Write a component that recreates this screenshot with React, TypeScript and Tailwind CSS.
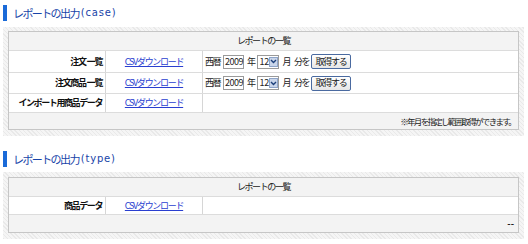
import React from "react";

const font = { fontFamily: '"Noto Sans CJK JP", "Noto Sans", sans-serif' };

function Heading({ jp, en }: { jp: string; en: string }) {
  return (
    <div className="flex items-center h-[16px] pl-[3px]">
      <div className="w-[4px] h-[16px] bg-[#1a6ad8]" />
      <div className="ml-[6px] text-[11px] leading-[16px] text-[#1844a8] flex">
        <span className="tracking-[-1.6px]">{jp}</span>
        <span className="ml-[2px] tracking-[0.8px]" style={{ fontFamily: '"DejaVu Sans", sans-serif', fontSize: "10px" }}>{en}</span>
      </div>
    </div>
  );
}

function Select() {
  return (
    <span className="inline-flex items-center h-[14px] w-[22px] border border-[#9a9a9a] bg-white">
      <span className="text-[9px] leading-[12px] pl-[2px] w-[11px] tracking-[-0.3px]">12</span>
      <span className="ml-auto mr-[1px] w-[9px] h-[10px] bg-[#c9d5ea] border border-[#8ea4c8] flex items-center justify-center">
        <svg width="7" height="5" viewBox="0 0 7 5">
          <path d="M1 1 L3.5 3.5 L6 1" stroke="#1c3f7a" strokeWidth="1.4" fill="none" />
        </svg>
      </span>
    </span>
  );
}

function Controls() {
  return (
    <div className="flex items-center text-[9px] tracking-[-1.5px] text-[#222] pl-[2px]">
      <span>西暦</span>
      <span className="ml-[3px] inline-flex items-center h-[14px] w-[21px] border border-[#9a9a9a] bg-white pl-[1px] tracking-[-0.5px]">2009</span>
      <span className="ml-[3px]">年</span>
      <span className="ml-[2px]"><Select /></span>
      <span className="ml-[4px]">月</span>
      <span className="ml-[4px]">分を</span>
      <span className="ml-[2px] inline-flex items-center justify-center h-[15px] w-[40px] border border-[#4a6aa0] rounded-[2px] bg-[linear-gradient(#ffffff,#e6e6e6)] text-[9px] tracking-[-1.2px] text-[#111]">取得する</span>
    </div>
  );
}

const pattern =
  "bg-[repeating-linear-gradient(45deg,#e9e9e9_0px,#e9e9e9_1px,#f5f5f5_1px,#f5f5f5_3px)]";

function Row({ label, h, children, link = true }: { label: string; h: string; children?: React.ReactNode; link?: boolean }) {
  return (
    <div className={`flex ${h} border-b border-[#dcdcdc] bg-white`}>
      <div className="w-[97px] border-r border-[#d6d6d6] flex items-center justify-end pr-[3px] text-[9px] font-bold tracking-[-1.4px] text-[#111] whitespace-pre">
        {label}
      </div>
      <div className="w-[97px] border-r border-[#d6d6d6] flex items-center justify-center">
        {link && (
          <a href="#" className="text-[9px] tracking-[-1.3px] text-[#2a3fd0] underline">CSVダウンロード</a>
        )}
      </div>
      <div className="flex-1 flex items-center">{children}</div>
    </div>
  );
}

export default function App() {
  return (
    <div className="w-[528px] h-[244px] bg-white overflow-hidden" style={font}>
      <div className="pt-[5px]">
        <Heading jp="レポートの出力" en="(case)" />
      </div>
      <div className={`mt-[6px] mx-[3px] w-[521px] pt-[4px] px-[5px] pb-[6px] ${pattern}`}>
        <div className="border border-[#c6c6c6] bg-[#f3f3f3]">
          <div className="h-[19px] flex items-center justify-center border-b border-[#dcdcdc] text-[9px] tracking-[-1.4px] text-[#222]">
            レポートの一覧
          </div>
          <Row label="注文  一覧" h="h-[22px]"><Controls /></Row>
          <Row label="注文商品  一覧" h="h-[21px]"><Controls /></Row>
          <Row label="インポート用商品データ" h="h-[19px]" />
          <div className="h-[16px] flex items-center justify-end pr-[3px] text-[8.5px] tracking-[-1.7px] text-[#222]">
            ※年月を指定し範囲取得ができます。
          </div>
        </div>
      </div>
      <div className="mt-[15px]">
        <Heading jp="レポートの出力" en="(type)" />
      </div>
      <div className={`mt-[5px] mx-[3px] w-[521px] pt-[5px] px-[5px] pb-[6px] ${pattern}`}>
        <div className="border border-[#c6c6c6] bg-[#f3f3f3]">
          <div className="h-[19px] flex items-center justify-center border-b border-[#dcdcdc] text-[9px] tracking-[-1.4px] text-[#222]">
            レポートの一覧
          </div>
          <Row label="商品データ" h="h-[18px]" />
          <div className="h-[17px] flex items-center justify-end pr-[4px] text-[9px] font-bold text-[#222]">--</div>
        </div>
      </div>
    </div>
  );
}
